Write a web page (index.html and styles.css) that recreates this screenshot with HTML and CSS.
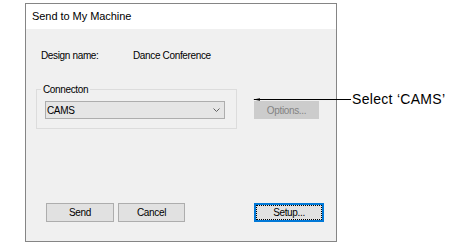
FILE: index.html
```html
<!DOCTYPE html>
<html>
<head>
<meta charset="utf-8">
<link rel="stylesheet" href="styles.css">
</head>
<body>
<div class="page">
  <div class="dialog">
    <div class="titlebar">Send to My Machine</div>
    <div class="content">
      <div class="design-row">
        <span class="label">Design name:</span>
        <span class="value">Dance Conference</span>
      </div>
      <div class="conn-row">
        <fieldset class="group">
          <legend class="legend">Connecton</legend>
          <div class="combo">
            <span class="combo-text">CAMS</span>
            <svg class="chev" width="7" height="4" viewBox="0 0 7 4"><polyline points="0.5,0.5 3.5,3.5 6.5,0.5" fill="none" stroke="#606060" stroke-width="1"/></svg>
          </div>
        </fieldset>
        <div class="btn btn-disabled options">Options...</div>
      </div>
      <div class="btn-row">
        <div class="btn send">Send</div>
        <div class="btn cancel">Cancel</div>
        <div class="btn btn-default setup"><span class="focus">Setup...</span></div>
      </div>
    </div>
  </div>
  <div class="callout">
    <svg class="callout-line" width="98" height="5" viewBox="0 0 98 5"><line x1="1" y1="2.5" x2="98" y2="2.5" stroke="#000" stroke-width="1"/><polygon points="0,2.5 7,1.2 7,3.8" fill="#000"/></svg>
    <span class="callout-text">Select ‘CAMS’</span>
  </div>
</div>
</body>
</html>
```
FILE: styles.css
```css
html, body {
  margin: 0;
  padding: 0;
  background: #ffffff;
}
.page {
  position: relative;
  width: 452px;
  height: 244px;
  padding: 3px 0 0 25px;
  box-sizing: border-box;
  font-family: "Liberation Sans", Arial, sans-serif;
}
.dialog {
  width: 312px;
  height: 239px;
  box-sizing: border-box;
  border: 1px solid #858585;
  display: flex;
  flex-direction: column;
  color: #000;
}
.titlebar {
  height: 25px;
  background: #ffffff;
  font-size: 11px;
  letter-spacing: -0.05px;
  line-height: 25px;
  padding-left: 6px;
}
.content {
  flex: 1;
  background: #f0f0f0;
  display: flex;
  flex-direction: column;
  font-size: 10px;
  letter-spacing: -0.35px;
}
.design-row {
  display: flex;
  margin-top: 20px;
  padding-left: 15px;
  line-height: 13px;
}
.label {
  width: 92px;
}
.conn-row {
  display: flex;
  align-items: flex-end;
  margin-top: 21px;
  padding-left: 10px;
}
.group {
  width: 201px;
  box-sizing: border-box;
  margin: 0;
  border: 1px solid #dcdcdc;
  padding: 0 11px 9px 4px;
}
.legend {
  padding: 0 2px;
  line-height: 13px;
}
.combo {
  margin-top: 5px;
  margin-left: 4px;
  height: 18px;
  box-sizing: border-box;
  border: 1px solid #adadad;
  background: #e5e5e5;
  display: flex;
  align-items: center;
  justify-content: space-between;
  padding: 0 4px 0 1px;
}
.chev {
  display: block;
}
.btn {
  height: 19px;
  box-sizing: border-box;
  border: 1px solid #adadad;
  background: #e1e1e1;
  display: flex;
  align-items: center;
  justify-content: center;
}
.btn-disabled {
  background: #cccccc;
  border-color: #cccccc;
  color: #838383;
}
.options {
  width: 65px;
  height: 18px;
  margin-left: 17px;
  margin-bottom: 10px;
}
.btn-row {
  display: flex;
  margin-top: auto;
  margin-bottom: 19px;
  padding-left: 20px;
}
.send {
  width: 68px;
}
.cancel {
  width: 67px;
  margin-left: 4px;
}
.setup {
  width: 70px;
  margin-left: 69px;
}
.btn-default {
  border: 2px solid #0078d7;
}
.focus {
  display: flex;
  align-items: center;
  justify-content: center;
  width: 100%;
  height: 100%;
  box-sizing: border-box;
  border: 1px dotted #000;
}
.callout {
  position: absolute;
  left: 253px;
  top: 90px;
  display: flex;
  align-items: center;
  height: 18px;
}
.callout-line {
  display: block;
}
.callout-text {
  font-family: "Liberation Sans", Arial, sans-serif;
  font-size: 14px;
  letter-spacing: 0.3px;
  margin-left: 1px;
  white-space: nowrap;
}
```
